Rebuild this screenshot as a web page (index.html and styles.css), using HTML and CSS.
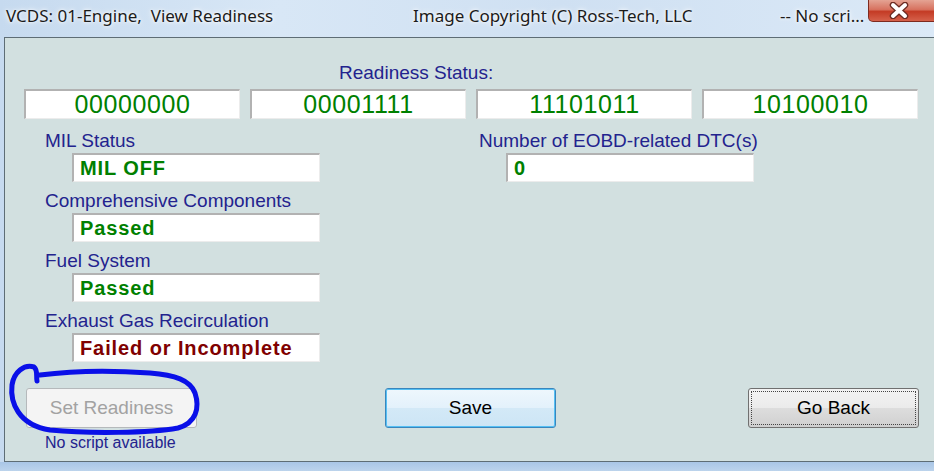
FILE: index.html
```html
<!DOCTYPE html>
<html lang="en">
<head>
    <meta charset="UTF-8">
    <title>VCDS: 01-Engine, View Readiness</title>
    <link rel="stylesheet" href="styles.css">
</head>
<body>
    <div class="window">
        <div class="titlebar">
            <span class="title-main">VCDS: 01-Engine,  View Readiness</span>
            <span class="title-copy">Image Copyright (C) Ross-Tech, LLC</span>
            <span class="title-note">-- No scri...</span>
            <div class="close-btn">
                <svg width="28" height="17" viewBox="0 0 28 17">
                    <path d="M8 3 L20 14 M20 3 L8 14" stroke="#6b2b22" stroke-width="6.5" stroke-linecap="round"/>
                    <path d="M8 3 L20 14 M20 3 L8 14" stroke="#ffffff" stroke-width="4" stroke-linecap="round"/>
                </svg>
            </div>
        </div>

        <div class="client">
            <div class="readiness-label">Readiness Status:</div>
            <div class="readiness-row">
                <div class="field bits">00000000</div>
                <div class="field bits">00001111</div>
                <div class="field bits">11101011</div>
                <div class="field bits">10100010</div>
            </div>

            <div class="monitors">
                <div class="col col-left">
                    <div class="group">
                        <div class="label">MIL Status</div>
                        <div class="field value ok">MIL OFF</div>
                    </div>
                    <div class="group">
                        <div class="label">Comprehensive Components</div>
                        <div class="field value ok">Passed</div>
                    </div>
                    <div class="group">
                        <div class="label">Fuel System</div>
                        <div class="field value ok">Passed</div>
                    </div>
                    <div class="group">
                        <div class="label">Exhaust Gas Recirculation</div>
                        <div class="field value bad">Failed or Incomplete</div>
                    </div>
                </div>
                <div class="col">
                    <div class="group">
                        <div class="label">Number of EOBD-related DTC(s)</div>
                        <div class="field value ok">0</div>
                    </div>
                </div>
            </div>

            <div class="buttons">
                <div class="set-wrap">
                    <button class="btn btn-set" disabled>Set Readiness</button>
                    <div class="note">No script available</div>
                </div>
                <button class="btn btn-save">Save</button>
                <button class="btn btn-back">Go Back</button>
            </div>
        </div>
        <div class="frame-bottom"></div>

        <!-- hand drawn mark round the disabled button -->
        <svg class="scribble" width="934" height="471" viewBox="0 0 934 471">
            <path d="M37 381 C36 376 38 370 34 367 C24 364 14 372 12 385 C10 402 18 425 50 430 C90 434 150 433 178 428 C196 423 200 408 195 393 C190 380 175 375 150 373 C110 370 70 371 40 375"
                  fill="none" stroke="#0a10e8" stroke-width="5" stroke-linecap="round" stroke-linejoin="round"/>
        </svg>
    </div>
</body>
</html>
```

FILE: styles.css
```css
body {
    margin: 0;
    background: #c9dcf0;
    overflow: hidden;
}

.window {
    position: relative;
    width: 934px;
    height: 471px;
    background: linear-gradient(90deg, #c6daef 0%, #d8e7f6 30%, #cfe0f2 60%, #dbe9f7 100%);
    font-family: "Liberation Sans", Arial, sans-serif;
}

/* title bar */
.titlebar {
    height: 37px;
    display: flex;
    align-items: flex-start;
    padding-left: 6px;
    box-sizing: border-box;
    font-family: "Noto Sans", "Open Sans", sans-serif;
    font-size: 17px;
    color: #1b1b1b;
    text-shadow: 0 0 6px #ffffff, 0 0 3px #ffffff;
}

.titlebar span {
    flex-shrink: 0;
    white-space: pre;
    line-height: 22px;
    padding-top: 5px;
    overflow: visible;
}

.title-main {
    width: 407px;
}

.title-copy {
    width: 367px;
}

.title-note {
    width: 88px;
}

.close-btn {
    flex-shrink: 0;
    width: 70px;
    height: 22px;
    box-sizing: border-box;
    border: 1px solid #7e2a1f;
    border-top: none;
    border-radius: 0 0 0 5px;
    background: linear-gradient(#e4a393 0%, #d7725f 45%, #c43b25 55%, #d5614b 100%);
    display: flex;
    justify-content: center;
    padding-right: 8px;
    align-items: center;
}

/* client area */
.client {
    margin-left: 4px;
    height: 425px;
    box-sizing: border-box;
    border-top: 1px solid #5e6d75;
    border-left: 1px solid #5e6d75;
    border-bottom: 1px solid #5e6d75;
    background: #d2e0e0;
    padding-top: 24px;
}

.frame-bottom {
    height: 9px;
    background: linear-gradient(#a9c6e6, #bcd3ec);
}

.readiness-label {
    padding-left: 334px;
    font-size: 19px;
    line-height: 22px;
    color: #23238e;
}

.readiness-row {
    display: flex;
    gap: 10px;
    margin-top: 5px;
    padding-left: 19px;
}

.field {
    background: #ffffff;
    box-sizing: border-box;
    border-style: solid;
    border-width: 2px 1px 1px 2px;
    border-color: #b2b2b2 #ececec #ececec #b2b2b2;
}

.bits {
    width: 216px;
    height: 30px;
    line-height: 27px;
    text-align: center;
    font-size: 25px;
    letter-spacing: 0.6px;
    color: #008000;
}

.monitors {
    display: grid;
    grid-template-columns: 434px auto;
    padding-left: 40px;
    margin-top: 11px;
}

.group {
    margin-bottom: 8px;
}

.label {
    font-size: 19px;
    line-height: 22px;
    color: #23238e;
    white-space: nowrap;
}

.value {
    width: 248px;
    height: 29px;
    margin-top: 1px;
    margin-left: 27px;
    padding-left: 6px;
    line-height: 26px;
    font-size: 20px;
    font-weight: bold;
    letter-spacing: 0.9px;
}

.ok {
    color: #008000;
}

.bad {
    color: #800000;
}

/* buttons */
.buttons {
    display: flex;
    align-items: flex-start;
    margin-top: 18px;
    padding-left: 21px;
}

.btn {
    width: 171px;
    height: 40px;
    box-sizing: border-box;
    font-family: "Liberation Sans", Arial, sans-serif;
    font-size: 19px;
    color: #000000;
    border-radius: 3px;
    padding: 0;
}

.btn-set {
    background: #f4f4f4;
    border: 1px solid #b5b9bb;
    color: #a2a2a2;
}

.note {
    margin-top: 6px;
    margin-left: 19px;
    font-size: 16px;
    line-height: 18px;
    color: #23238e;
}

.btn-save {
    margin-left: 188px;
    background: linear-gradient(#eef7fd 0%, #e3f1fb 50%, #d3e9f7 51%, #cde5f5 100%);
    border: 1px solid #3a86bd;
    box-shadow: inset 0 0 0 1px #55c0f4;
}

.btn-back {
    margin-left: 192px;
    background: linear-gradient(#f3f3f3 0%, #ebebeb 50%, #dddddd 51%, #d0d0d0 100%);
    border: 1px solid #707070;
    outline: 1px dotted #444444;
    outline-offset: -4px;
}

.scribble {
    position: absolute;
    left: 0;
    top: 0;
    pointer-events: none;
}
```
